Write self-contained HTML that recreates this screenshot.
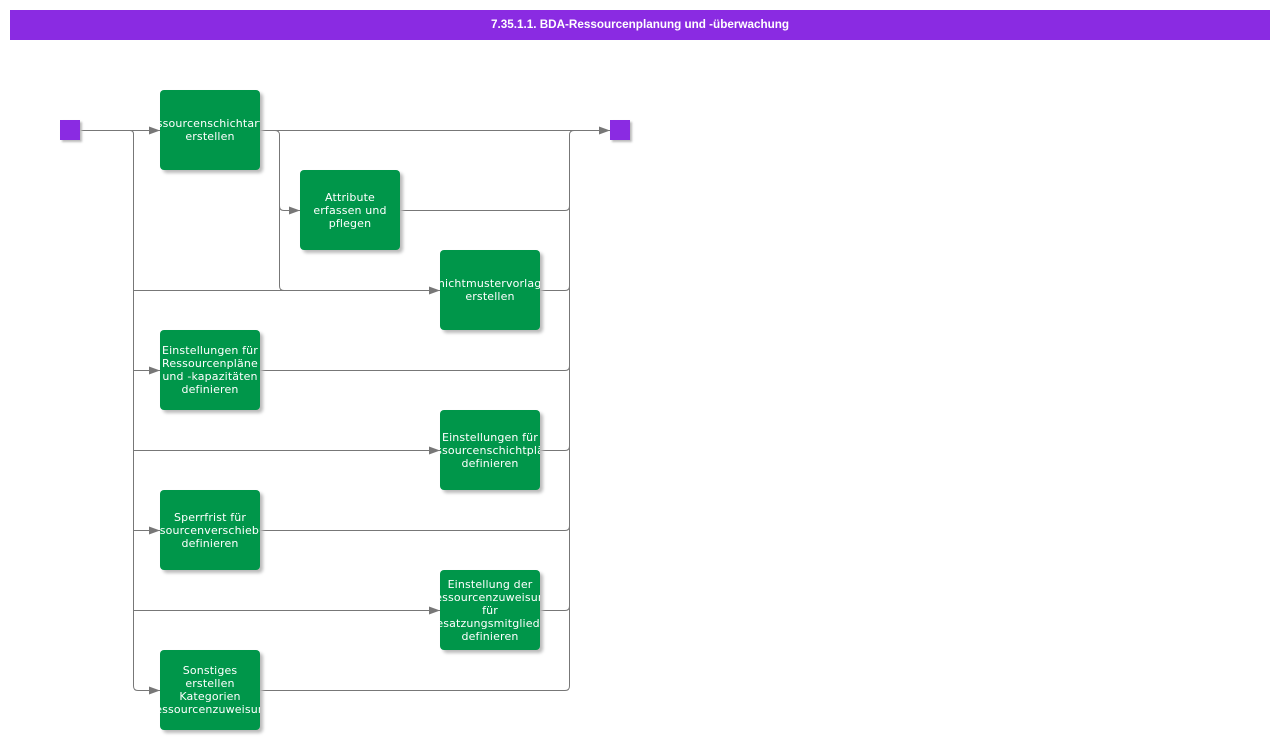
<!DOCTYPE html>
<html><head><meta charset="utf-8"><style>
body{margin:0;width:1280px;height:740px;background:#fff;overflow:hidden;position:relative;font-family:"DejaVu Sans","Liberation Sans",sans-serif}
.t{position:absolute;left:10px;top:10px;width:1260px;height:30px;background:#8a2be2;color:#fff;font:bold 11.7px "Liberation Sans",sans-serif;line-height:30px;text-align:center}
.b{position:absolute;width:100px;height:80px;background:#00964a;border-radius:4px;box-shadow:3px 3px 3px #bbb;color:#fff;font-size:11px;letter-spacing:0.15px;line-height:13px;display:flex;align-items:center;justify-content:center;overflow:hidden;text-align:center;white-space:nowrap}
.b div{width:100px;display:flex;flex-direction:column;align-items:center}
.s{position:absolute;width:20px;height:20px;background:#8a2be2;box-shadow:2px 2px 2px #bbb}
</style></head><body>
<div class="t">7.35.1.1. BDA-Ressourcenplanung und -überwachung</div>
<svg width="1280" height="740" style="position:absolute;left:0;top:0" fill="none" stroke="#777" stroke-width="1">
<defs><marker id="a" markerWidth="11" markerHeight="8" refX="11" refY="4" orient="auto" markerUnits="userSpaceOnUse"><path d="M0,0L11,4L0,8z" fill="#777" stroke="none"/></marker></defs>
<path d="M80,130.5H160" marker-end="url(#a)"/>
<path d="M130,130.5Q133.5,130.5 133.5,134V686Q133.5,690.5 138,690.5H160" marker-end="url(#a)"/>
<path d="M133.5,290.5H440" marker-end="url(#a)"/>
<path d="M133.5,370.5H160" marker-end="url(#a)"/>
<path d="M133.5,450.5H440" marker-end="url(#a)"/>
<path d="M133.5,530.5H160" marker-end="url(#a)"/>
<path d="M133.5,610.5H440" marker-end="url(#a)"/>
<path d="M260,130.5H610" marker-end="url(#a)"/>
<path d="M275,130.5Q279.5,130.5 279.5,135V286Q279.5,290.5 284,290.5"/>
<path d="M279.5,206Q279.5,210.5 284,210.5H300" marker-end="url(#a)"/>
<path d="M400,210.5H565Q569.5,210.5 569.5,206"/>
<path d="M540,290.5H565Q569.5,290.5 569.5,286"/>
<path d="M260,370.5H565Q569.5,370.5 569.5,366"/>
<path d="M540,450.5H565Q569.5,450.5 569.5,446"/>
<path d="M260,530.5H565Q569.5,530.5 569.5,526"/>
<path d="M540,610.5H565Q569.5,610.5 569.5,606"/>
<path d="M260,690.5H565Q569.5,690.5 569.5,686V135Q569.5,130.5 574,130.5"/>
</svg>
<div class="s" style="left:60px;top:120px"></div>
<div class="s" style="left:610px;top:120px"></div>
<div class="b" style="left:160px;top:90px"><div><span>Ressourcenschichtarten</span><span>erstellen</span></div></div>
<div class="b" style="left:300px;top:170px"><div><span>Attribute</span><span>erfassen und</span><span>pflegen</span></div></div>
<div class="b" style="left:440px;top:250px"><div><span>Schichtmustervorlagen</span><span>erstellen</span></div></div>
<div class="b" style="left:160px;top:330px"><div><span>Einstellungen für</span><span>Ressourcenpläne</span><span>und -kapazitäten</span><span>definieren</span></div></div>
<div class="b" style="left:440px;top:410px"><div><span>Einstellungen für</span><span>Ressourcenschichtpläne</span><span>definieren</span></div></div>
<div class="b" style="left:160px;top:490px"><div><span>Sperrfrist für</span><span>Ressourcenverschiebung</span><span>definieren</span></div></div>
<div class="b" style="left:440px;top:570px"><div><span>Einstellung der</span><span>Ressourcenzuweisung</span><span>für</span><span>Besatzungsmitglieder</span><span>definieren</span></div></div>
<div class="b" style="left:160px;top:650px"><div><span>Sonstiges</span><span>erstellen</span><span>Kategorien</span><span>Ressourcenzuweisung</span></div></div>
</body></html>
